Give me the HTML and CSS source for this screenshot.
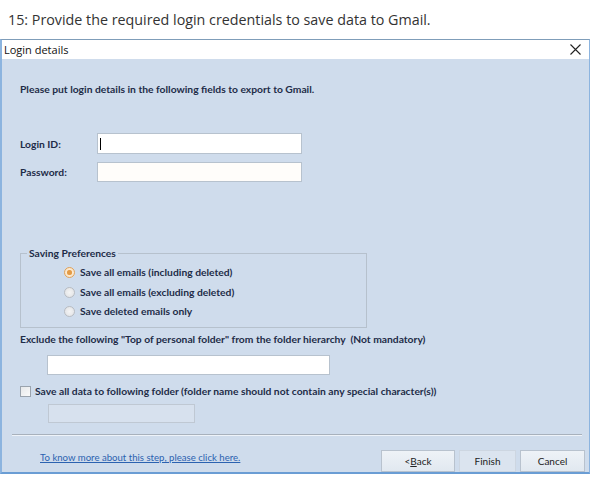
FILE: index.html
```html
<!DOCTYPE html>
<html>
<head>
<meta charset="utf-8">
<link rel="stylesheet" href="styles.css">
</head>
<body>
<div class="caption">15: Provide the required login credentials to save data to Gmail.</div>
<div class="dialog">
  <div class="titlebar">
    <span class="title">Login details</span>
    <svg class="close" width="11" height="11" viewBox="0 0 11 11"><path d="M0.5 0.5L10.5 10.5M10.5 0.5L0.5 10.5" stroke="#222" stroke-width="1.1" fill="none"/></svg>
  </div>
  <div class="body">
    <div class="intro">Please put login details in the following fields to export to Gmail.</div>
    <div class="row row-login">
      <label class="lbl">Login ID:</label>
      <div class="input input-login"><span class="caret"></span></div>
    </div>
    <div class="row row-pass">
      <label class="lbl">Password:</label>
      <div class="input input-pass"></div>
    </div>
    <div class="group">
      <div class="legend">Saving Preferences</div>
      <div class="opt"><span class="radio on"></span>Save all emails (including deleted)</div>
      <div class="opt"><span class="radio"></span>Save all emails (excluding deleted)</div>
      <div class="opt"><span class="radio"></span>Save deleted emails only</div>
    </div>
    <div class="exclude">Exclude the following "Top of personal folder" from the folder hierarchy&nbsp; (Not mandatory)</div>
    <div class="input input-exclude"></div>
    <div class="check"><span class="box"></span>Save all data to following folder (folder name should not contain any special character(s))</div>
    <div class="input input-folder"></div>
    <div class="sep"></div>
    <div class="footer">
      <a class="link">To know more about this step, please click here.</a>
      <div class="buttons">
        <div class="btn btn-back">&lt; <u>B</u>ack</div>
        <div class="btn btn-finish">Finish</div>
        <div class="btn btn-cancel">Cancel</div>
      </div>
    </div>
  </div>
</div>
</body>
</html>
```

FILE: styles.css
```css
html, body {
  margin: 0;
  padding: 0;
  background: #ffffff;
}
body {
  width: 591px;
  height: 477px;
  overflow: hidden;
  font-family: "Open Sans", "Noto Sans", sans-serif;
}
.caption {
  height: 39px;
  box-sizing: border-box;
  padding: 11px 0 0 8px;
  font-size: 14.3px;
  line-height: 18px;
  color: #333;
  font-weight: 400;
}
.dialog {
  width: 590px;
  height: 435px;
  box-sizing: border-box;
  border-top: 1px solid #7f9db9;
  border-left: 2px solid #8cb4df;
  border-right: 1px solid #8cb4df;
  border-bottom: 2px solid #6a9dd4;
  display: flex;
  flex-direction: column;
}
.titlebar {
  height: 21px;
  background: #ffffff;
  display: flex;
  align-items: center;
  justify-content: space-between;
  padding: 0 8px 0 2px;
}
.title {
  font-size: 11px;
  color: #111;
}
.close {
  display: block;
}
.body {
  flex: 1;
  background: #cfdcec;
  padding: 0 0 0 18px;
  color: #1e2c48;
  font-family: "Lato", "Open Sans", sans-serif;
  font-size: 10.3px;
  font-weight: 700;
  display: flex;
  flex-direction: column;
}
.intro {
  margin-top: 23px;
  line-height: 14px;
}
.row {
  display: flex;
  align-items: center;
}
.row-login { margin-top: 37px; }
.row-pass { margin-top: 8px; }
.lbl {
  width: 77px;
}
.input {
  background: #fff;
  border: 1px solid #b7c2ce;
  box-sizing: border-box;
}
.input-login { width: 205px; height: 21px; position: relative; }
.input-pass { width: 205px; height: 20px; background: #fffdfa; }
.caret {
  position: absolute;
  left: 2px;
  top: 4px;
  width: 1px;
  height: 12px;
  background: #000;
}
.group {
  margin-top: 71px;
  width: 347px;
  height: 75px;
  box-sizing: border-box;
  border: 1px solid #b6c1cd;
  position: relative;
  padding-top: 9px;
}
.legend {
  position: absolute;
  top: -7px;
  left: 6px;
  background: #cfdcec;
  padding: 0 2px;
  line-height: 13px;
}
.opt {
  display: flex;
  align-items: center;
  padding-left: 43px;
  height: 19.5px;
  line-height: 13px;
}
.radio {
  width: 11px;
  height: 11px;
  border-radius: 50%;
  border: 1px solid #b8bcc2;
  background: radial-gradient(circle, #f4f4f4 0%, #dfe1e4 100%);
  box-sizing: border-box;
  margin-right: 5px;
  position: relative;
}
.radio.on {
  border-color: #e0a25a;
  background: radial-gradient(circle, #f6c480 0 2px, #fbe9cf 3px, #f8e2c4 100%);
}
.radio.on::after {
  content: "";
  position: absolute;
  left: 2px;
  top: 2px;
  width: 5px;
  height: 5px;
  border-radius: 50%;
  background: #e39a45;
}
.exclude {
  margin-top: 4px;
  line-height: 14px;
}
.input-exclude {
  margin: 9px 0 0 27px;
  width: 283px;
  height: 20px;
}
.check {
  margin-top: 9px;
  display: flex;
  align-items: center;
  line-height: 14px;
}
.box {
  width: 11px;
  height: 11px;
  box-sizing: border-box;
  border: 1px solid #9aa3ad;
  background: linear-gradient(135deg, #e6e8ea, #fafafa);
  margin-right: 4px;
}
.input-folder {
  margin: 6px 0 0 28px;
  width: 147px;
  height: 19px;
  background: #d7e1ee;
  border-color: #bfc8d3;
}
.sep {
  margin: 11px 7px 0 -8px;
  height: 1px;
  background: #a8b1bc;
  border-bottom: 1px solid #eef3f9;
}
.footer {
  display: flex;
  align-items: flex-start;
  justify-content: space-between;
  margin-top: 14px;
  padding-right: 4px;
}
.link {
  margin: 2px 0 0 20px;
  font-weight: 400;
  color: #2b62b0;
  text-decoration: underline;
  font-size: 9.6px;
  line-height: 12px;
}
.buttons {
  display: flex;
  gap: 4px;
}
.btn {
  height: 22px;
  box-sizing: border-box;
  border: 1px solid #b8c2ce;
  background: linear-gradient(#eef2f7, #e1e8f0);
  font-weight: 400;
  font-size: 10px;
  color: #222;
  display: flex;
  align-items: center;
  justify-content: center;
}
.btn-back { width: 74px; }
.btn-finish { width: 57px; border-color: #cdd6e1; background: #dbe4ef; }
.btn-cancel { width: 65px; }
```
